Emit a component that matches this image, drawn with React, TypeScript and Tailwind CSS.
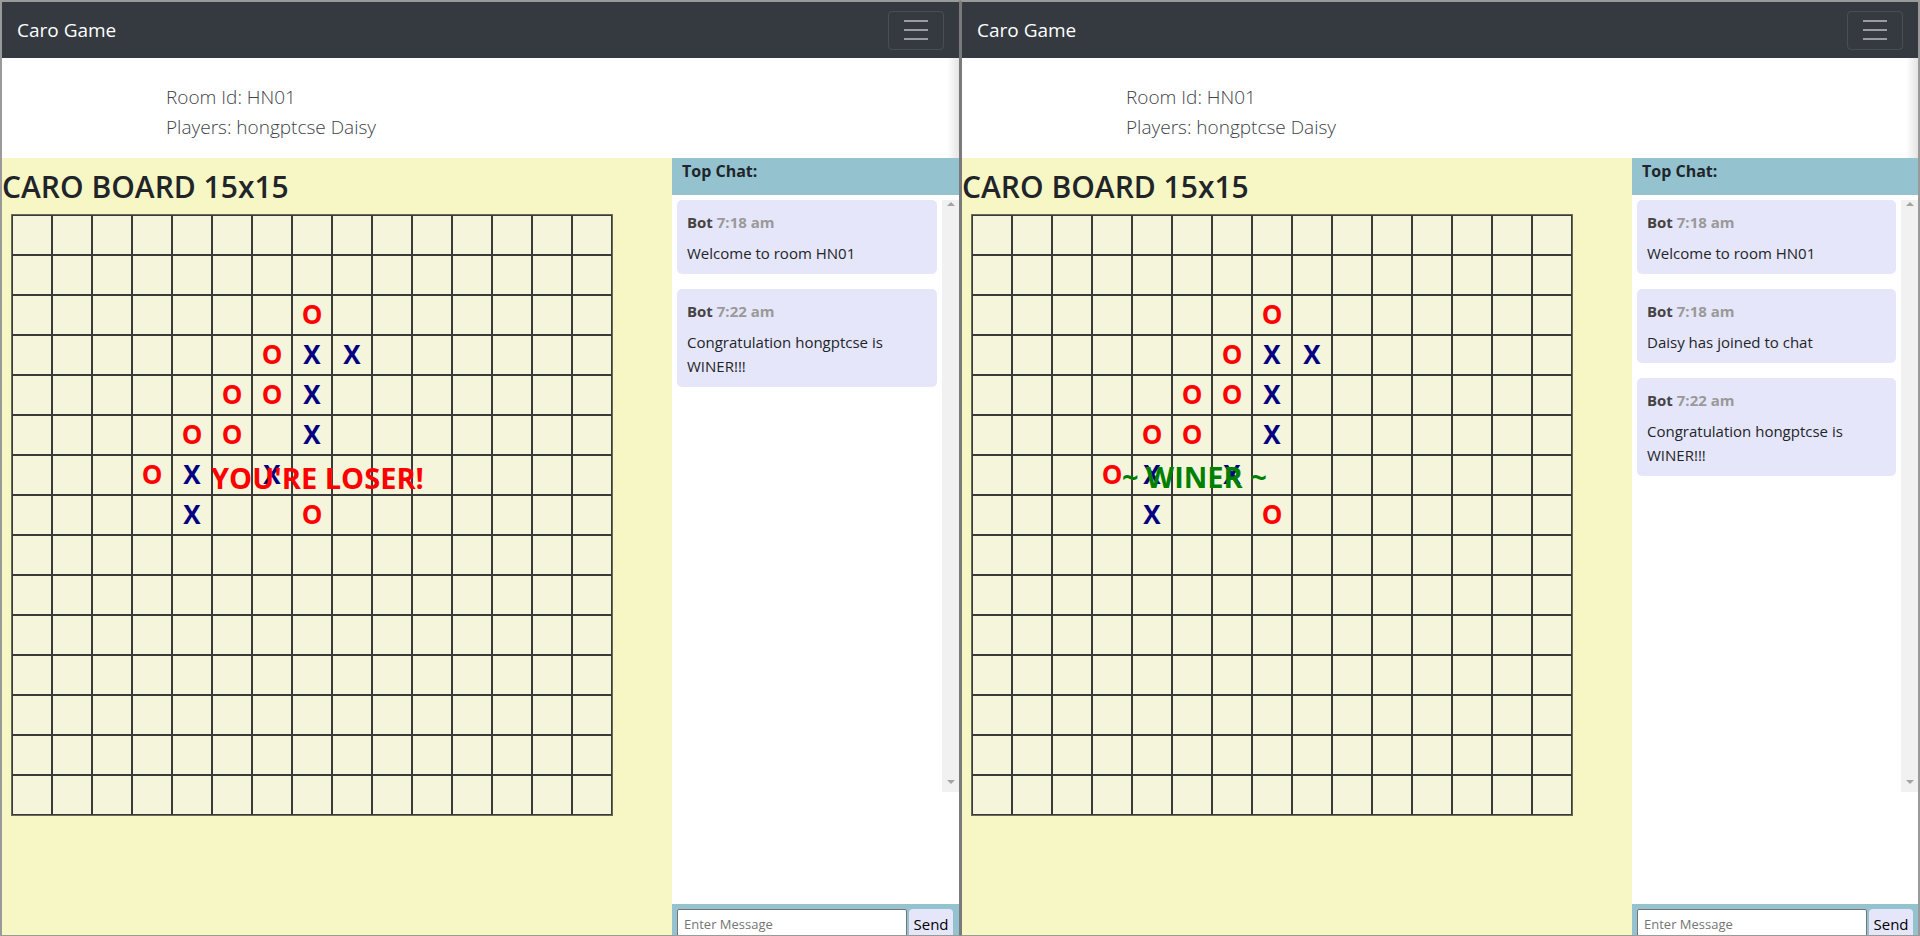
import React from "react";

type Piece = "X" | "O";
const pieces: Record<string, Piece> = {
  "2-7": "O",
  "3-6": "O",
  "3-7": "X",
  "3-8": "X",
  "4-5": "O",
  "4-6": "O",
  "4-7": "X",
  "5-4": "O",
  "5-5": "O",
  "5-7": "X",
  "6-3": "O",
  "6-4": "X",
  "6-6": "X",
  "7-4": "X",
  "7-7": "O",
};

type Msg = { time: string; text: string };

function Board({ overlay }: { overlay: React.ReactNode }) {
  const cells: React.ReactNode[] = [];
  for (let r = 0; r < 15; r++) {
    for (let c = 0; c < 15; c++) {
      const p = pieces[`${r}-${c}`];
      cells.push(
        <div
          key={`${r}-${c}`}
          className="flex h-[40px] w-[40px] items-center justify-center border border-[#3a3a3a] bg-[#f5f5dc] pb-[3px] text-[26px] font-bold leading-none"
        >
          {p && <span className={p === "X" ? "text-[#000080]" : "text-[#ff0000]"}>{p}</span>}
        </div>
      );
    }
  }
  return (
    <div className="relative ml-[9px] grid w-fit grid-cols-[repeat(15,40px)] border border-[#6a6a5a]">
      {cells}
      {overlay}
    </div>
  );
}

function Scrollbar() {
  return (
    <div className="flex w-[17px] shrink-0 flex-col items-center justify-between bg-[#f1f1f1] pt-[2px] pb-[8px]">
      <div className="h-0 w-0 border-x-[4px] border-b-[4px] border-x-transparent border-b-[#a3a3a3]" />
      <div className="h-0 w-0 border-x-[4px] border-t-[4px] border-x-transparent border-t-[#a3a3a3]" />
    </div>
  );
}

function Window({ overlay, messages, right }: { overlay: React.ReactNode; messages: Msg[]; right: boolean }) {
  return (
    <div
      className={
        right
          ? "flex h-[936px] w-[960px] shrink-0 flex-col overflow-hidden border-t-2 border-b border-l-2 border-r-2 border-[#9a9a9a] border-l-[#7a7a7a]"
          : "flex h-[936px] w-[960px] shrink-0 flex-col overflow-hidden border-t-2 border-b border-l-2 border-r border-[#9a9a9a] border-r-[#7a7a7a]"
      }
    >
      {/* navbar */}
      <div className="flex h-[56px] shrink-0 items-center justify-between bg-[#343a40] pl-[15px] pr-[15px]">
        <span className="text-[19px] leading-none text-white">Caro Game</span>
        <div className="flex h-[39px] w-[56px] flex-col items-center justify-center gap-[7px] rounded-[4px] border border-white/10">
          <span className="h-[2px] w-[24px] bg-white/50" />
          <span className="h-[2px] w-[24px] bg-white/50" />
          <span className="h-[2px] w-[24px] bg-white/50" />
        </div>
      </div>
      {/* info */}
      <div className="flex h-[100px] shrink-0 bg-white">
        <div className="flex-1 pl-[164px] pt-[24px] text-[19px] font-light leading-[30px] text-[#3e4349]">
          <div>Room Id: HN01</div>
          <div>Players: hongptcse Daisy</div>
        </div>
        <div className="w-[12px] bg-linear-to-r from-white to-[#e4e4e4]" />
      </div>
      {/* main */}
      <div className="flex min-h-0 flex-1">
        <div className="w-[670px] shrink-0 bg-[#f7f7c5] pt-[14px]">
          <h2 className="text-[30px] font-semibold leading-none text-[#212529]">CARO BOARD 15x15</h2>
          <div className="mt-[12px]">
            <Board overlay={overlay} />
          </div>
        </div>
        <div className="flex min-w-0 flex-1 flex-col bg-white">
          <div className="h-[37px] shrink-0 bg-[#94c3cf] pl-[10px] pt-[5px] text-[16px] font-bold leading-none text-[#212529]">
            Top Chat:
          </div>
          <div className="mt-[5px] flex h-[592px] shrink-0">
            <div className="flex min-w-0 flex-1 flex-col gap-[15px] px-[5px]">
              {messages.map((m, i) => (
                <div key={i} className="rounded-[5px] bg-[#e6e6fa] px-[10px] pt-[10px] pb-[9px] text-[15px] leading-[24px]">
                  <div className="font-bold">
                    <span className="text-[#444]">Bot</span> <span className="text-[#999]">{m.time}</span>
                  </div>
                  <div className="mt-[7px] text-[#212529]">{m.text}</div>
                </div>
              ))}
            </div>
            <Scrollbar />
          </div>
          <div className="flex-1" />
          <div className="flex h-[31px] shrink-0 gap-[2px] bg-[#94c3cf] px-[5px] pt-[5px]">
            <input
              readOnly
              placeholder="Enter Message"
              className="h-[30px] w-[230px] shrink-0 rounded-[2px] border border-[#767676] bg-white px-[6px] text-[13px] outline-none placeholder:text-[#757575]"
            />
            <button className="h-[30px] w-[44px] shrink-0 rounded-[4px] bg-[#e6e6fa] text-[15px] leading-none text-black">
              Send
            </button>
          </div>
        </div>
      </div>
    </div>
  );
}

export default function App() {
  const leftMsgs: Msg[] = [
    { time: "7:18 am", text: "Welcome to room HN01" },
    { time: "7:22 am", text: "Congratulation hongptcse is WINER!!!" },
  ];
  const rightMsgs: Msg[] = [
    { time: "7:18 am", text: "Welcome to room HN01" },
    { time: "7:18 am", text: "Daisy has joined to chat" },
    { time: "7:22 am", text: "Congratulation hongptcse is WINER!!!" },
  ];
  return (
    <div className="flex h-[936px] w-[1920px] overflow-hidden bg-white font-['Open_Sans','Noto_Sans',sans-serif]">
      <Window
        right={false}
        messages={leftMsgs}
        overlay={
          <div className="absolute left-[199px] top-[248px] whitespace-nowrap text-[29px] font-bold leading-none text-[#ff0000]">
            YOU'RE LOSER!
          </div>
        }
      />
      <Window
        right={true}
        messages={rightMsgs}
        overlay={
          <div className="absolute left-[150px] top-[247px] whitespace-nowrap text-[29px] font-bold leading-none text-[#008000]">
            ~ WINER ~
          </div>
        }
      />
    </div>
  );
}
